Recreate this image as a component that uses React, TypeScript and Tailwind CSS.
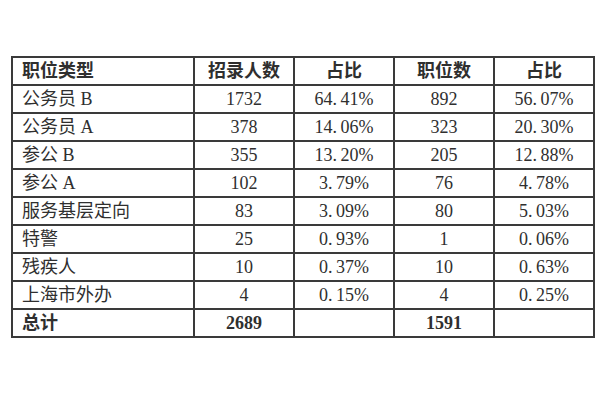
import React from "react";

const rows: [string, string, string, string, string][] = [
  ["公务员 B", "1732", "64.41%", "892", "56.07%"],
  ["公务员 A", "378", "14.06%", "323", "20.30%"],
  ["参公 B", "355", "13.20%", "205", "12.88%"],
  ["参公 A", "102", "3.79%", "76", "4.78%"],
  ["服务基层定向", "83", "3.09%", "80", "5.03%"],
  ["特警", "25", "0.93%", "1", "0.06%"],
  ["残疾人", "10", "0.37%", "10", "0.63%"],
  ["上海市外办", "4", "0.15%", "4", "0.25%"],
];

const cell = "border-2 border-[#3a3a3a] h-[28px] p-0 leading-none";

// SimSun-style half-width dot: leave a gap after the decimal point
const Pct: React.FC<{ v: string }> = ({ v }) => {
  const [a, b] = v.split(".");
  return (
    <span>
      {a}
      <span className="inline-block w-[8px] text-left">.</span>
      {b}
    </span>
  );
};

const App: React.FC = () => {
  return (
    <div
      className="w-[600px] h-[400px] bg-white pl-[11px] pt-[56px] text-[#2f2f2f] text-[18px]"
      style={{ fontFamily: '"Liberation Serif", "Noto Sans CJK SC", serif' }}
    >
      <table className="table-fixed border-collapse w-[582px]">
        <colgroup>
          <col className="w-[182px]" />
          <col className="w-[100px]" />
          <col className="w-[100px]" />
          <col className="w-[100px]" />
          <col className="w-[100px]" />
        </colgroup>
        <thead>
          <tr className="font-bold">
            <th className={`${cell} text-left pl-[9px]`}>职位类型</th>
            <th className={`${cell} text-center`}>招录人数</th>
            <th className={`${cell} text-center`}>占比</th>
            <th className={`${cell} text-center`}>职位数</th>
            <th className={`${cell} text-center`}>占比</th>
          </tr>
        </thead>
        <tbody>
          {rows.map((r) => (
            <tr key={r[0]}>
              <td className={`${cell} text-left pl-[9px]`}>{r[0]}</td>
              <td className={`${cell} text-center`}>{r[1]}</td>
              <td className={`${cell} text-center`}>
                <Pct v={r[2]} />
              </td>
              <td className={`${cell} text-center`}>{r[3]}</td>
              <td className={`${cell} text-center`}>
                <Pct v={r[4]} />
              </td>
            </tr>
          ))}
          <tr className="font-bold">
            <td className={`${cell} text-left pl-[9px]`}>总计</td>
            <td className={`${cell} text-center`}>2689</td>
            <td className={cell}></td>
            <td className={`${cell} text-center`}>1591</td>
            <td className={cell}></td>
          </tr>
        </tbody>
      </table>
    </div>
  );
};

export default App;
